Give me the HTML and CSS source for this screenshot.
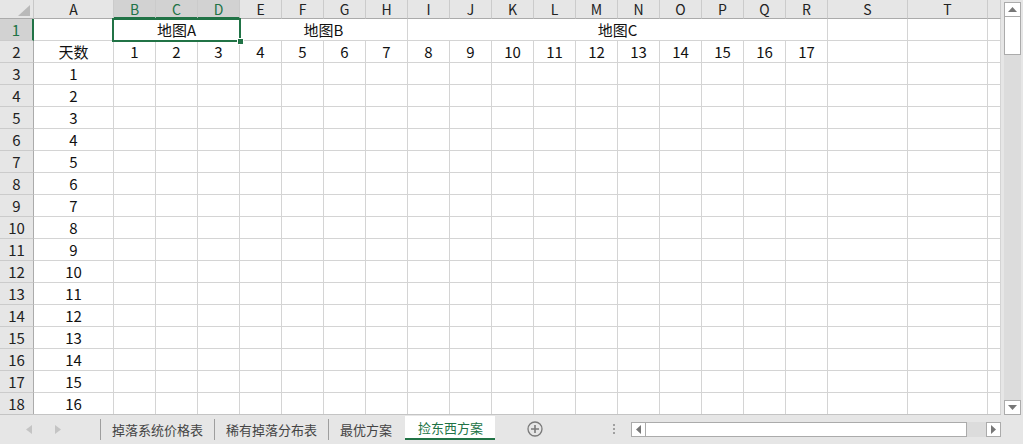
FILE: index.html
```html
<!DOCTYPE html>
<html lang="zh-CN">
<head>
    <meta charset="UTF-8">
    <title>捡东西方案</title>
    <link rel="stylesheet" href="styles.css">
</head>
<body>
    <div class="app">
        <!-- Таблица -->
        <div class="sheet-wrap">
            <div class="sheet" id="sheet"></div>
            <div class="selection"><span class="handle"></span></div>
        </div>

        <!-- Вертикальная прокрутка -->
        <div class="vscroll">
            <div class="sbtn"><svg width="9" height="5" viewBox="0 0 9 5"><path d="M0 5 L4.5 0 L9 5 Z" fill="#777"/></svg></div>
            <div class="vthumb"></div>
            <div class="vtrack"></div>
            <div class="sbtn"><svg width="9" height="5" viewBox="0 0 9 5"><path d="M0 0 L4.5 5 L9 0 Z" fill="#777"/></svg></div>
        </div>

        <!-- Листы -->
        <div class="tabbar">
            <div class="nav">
                <svg width="6" height="9" viewBox="0 0 6 9"><path d="M6 0 L0 4.5 L6 9 Z" fill="#c4c4c4"/></svg>
                <svg width="6" height="9" viewBox="0 0 6 9"><path d="M0 0 L6 4.5 L0 9 Z" fill="#c4c4c4"/></svg>
            </div>
            <div class="tabs">
                <div class="tab">掉落系统价格表</div>
                <div class="tab">稀有掉落分布表</div>
                <div class="tab">最优方案</div>
                <div class="tab active">捡东西方案</div>
            </div>
            <div class="add">
                <svg width="16" height="16" viewBox="0 0 16 16">
                    <circle cx="8" cy="8" r="7" fill="none" stroke="#7a7a7a" stroke-width="1.3"/>
                    <path d="M8 4 V12 M4 8 H12" stroke="#7a7a7a" stroke-width="1.6"/>
                </svg>
            </div>
            <div class="dots"><span></span><span></span><span></span></div>
            <div class="hscroll">
                <div class="sbtn"><svg width="5" height="9" viewBox="0 0 5 9"><path d="M5 0 L0 4.5 L5 9 Z" fill="#777"/></svg></div>
                <div class="hthumb"></div>
                <div class="htrack"></div>
                <div class="sbtn"><svg width="5" height="9" viewBox="0 0 5 9"><path d="M0 0 L5 4.5 L0 9 Z" fill="#777"/></svg></div>
            </div>
        </div>
    </div>

    <script>
        // Строим сетку листа
        var sheet = document.getElementById('sheet');
        var letters = 'ABCDEFGHIJKLMNOPQRST'.split('');

        function cell(cls, text) {
            var d = document.createElement('div');
            d.className = cls;
            if (text !== undefined) d.textContent = text;
            sheet.appendChild(d);
            return d;
        }

        // Заголовки столбцов
        var corner = cell('corner');
        corner.innerHTML = '<svg width="12" height="11" viewBox="0 0 12 11"><path d="M12 0 L12 11 L0 11 Z" fill="#b9b9b9"/></svg>';
        letters.forEach(function (l) {
            cell('colhead' + ('BCD'.indexOf(l) >= 0 ? ' active' : ''), l);
        });
        cell('colhead', '');

        // Строка 1 — объединённые ячейки
        cell('rowhead active', '1');
        cell('cell');
        cell('cell span3', '地图A');
        cell('cell span4', '地图B');
        cell('cell span10', '地图C');
        cell('cell'); cell('cell'); cell('cell');

        // Строка 2
        cell('rowhead', '2');
        cell('cell', '天数');
        for (var i = 1; i <= 17; i++) cell('cell', i);
        cell('cell'); cell('cell'); cell('cell');

        // Строки 3..18
        for (var r = 3; r <= 18; r++) {
            cell('rowhead', r);
            cell('cell', r - 2);
            for (var c = 0; c < 20; c++) cell('cell');
        }
    </script>
</body>
</html>
```

FILE: styles.css
```css
/* Основные стили */
* {
    box-sizing: border-box;
}
body {
    margin: 0;
    font-family: "Noto Sans CJK SC", sans-serif;
    color: #222;
    background: #e6e6e6;
}
.app {
    width: 1023px;
    height: 444px;
    display: grid;
    grid-template-columns: 1001px 22px;
    grid-template-rows: 415px 29px;
    background: #e6e6e6;
    overflow: hidden;
}

/* Сетка */
.sheet-wrap {
    position: relative;
    overflow: hidden;
    border-bottom: 1px solid #c4c4c4;
}
.sheet {
    display: grid;
    grid-template-columns: 34px 80px repeat(17, 42px) 80px 80px 13px;
    grid-template-rows: 19px repeat(18, 22px);
    background: #fff;
}
.cell {
    border-right: 1px solid #d4d4d4;
    border-bottom: 1px solid #d4d4d4;
    display: flex;
    align-items: center;
    justify-content: center;
    font-size: 15px;
    color: #111;
    line-height: 1;
    white-space: nowrap;
}
.span3 { grid-column: span 3; }
.span4 { grid-column: span 4; }
.span10 { grid-column: span 10; }

.corner {
    background: #e6e6e6;
    border-right: 1px solid #c8c8c8;
    border-bottom: 1px solid #ababab;
    display: flex;
    align-items: flex-end;
    justify-content: flex-end;
    padding: 0 3px 2px 0;
}
.colhead {
    background: #e6e6e6;
    border-right: 1px solid #cbcbcb;
    border-bottom: 1px solid #ababab;
    display: flex;
    align-items: center;
    justify-content: center;
    font-size: 14px;
    line-height: 1;
    color: #222;
}
.colhead.active {
    background: #d2d2d2;
    color: #217346;
    border-bottom: 2px solid #217346;
}
.rowhead {
    background: #e6e6e6;
    border-right: 1px solid #ababab;
    border-bottom: 1px solid #cbcbcb;
    display: flex;
    align-items: center;
    justify-content: center;
    font-size: 15px;
    line-height: 1;
    color: #222;
}
.rowhead.active {
    background: #d2d2d2;
    color: #217346;
    border-right: 2px solid #217346;
}

/* Выделение */
.selection {
    position: absolute;
    left: 112px;
    top: 18px;
    width: 129px;
    height: 24px;
    border: 2px solid #217346;
}
.handle {
    position: absolute;
    right: -5px;
    bottom: -5px;
    width: 7px;
    height: 7px;
    background: #217346;
    border: 1px solid #fff;
}

/* Вертикальная прокрутка */
.vscroll {
    display: flex;
    flex-direction: column;
    padding: 2px 2px 0 3px;
}
.sbtn {
    width: 17px;
    height: 15px;
    flex: none;
    background: #fff;
    border: 1px solid #ababab;
    display: flex;
    align-items: center;
    justify-content: center;
}
.vthumb {
    height: 38px;
    background: #fff;
    border: 1px solid #ababab;
    border-top: none;
}
.vtrack {
    flex: 1;
    background: #dcdcdc;
}

/* Листы */
.tabbar {
    grid-column: 1 / 3;
    display: flex;
    align-items: flex-start;
    font-size: 13px;
}
.nav {
    width: 100px;
    height: 25px;
    display: flex;
    align-items: center;
    gap: 23px;
    padding-left: 26px;
    padding-top: 4px;
}
.tabs {
    display: flex;
    align-items: flex-end;
    height: 25px;
}
.tab {
    height: 21px;
    padding: 0 11px 0 11px;
    border-left: 1px solid #9e9e9e;
    display: flex;
    align-items: center;
    color: #444;
    line-height: 1;
}
.tab.active {
    height: 24px;
    padding: 0 12px 0 13px;
    margin-left: 2px;
    border-left: none;
    background: #fff;
    color: #217346;
    border-bottom: 2px solid #217346;
}
.add {
    margin-left: 32px;
    margin-top: 6px;
    width: 16px;
    height: 16px;
}
.dots {
    margin-left: 70px;
    margin-top: 9px;
    display: flex;
    flex-direction: column;
    gap: 2px;
}
.dots span {
    width: 2px;
    height: 2px;
    background: #a0a0a0;
}
.hscroll {
    margin-left: 16px;
    margin-top: 7px;
    width: 370px;
    height: 15px;
    display: flex;
}
.hscroll .sbtn {
    width: 15px;
}
.hthumb {
    flex: 1;
    background: #fff;
    border: 1px solid #ababab;
    border-left: none;
}
.htrack {
    width: 19px;
    background: #dcdcdc;
}
```
